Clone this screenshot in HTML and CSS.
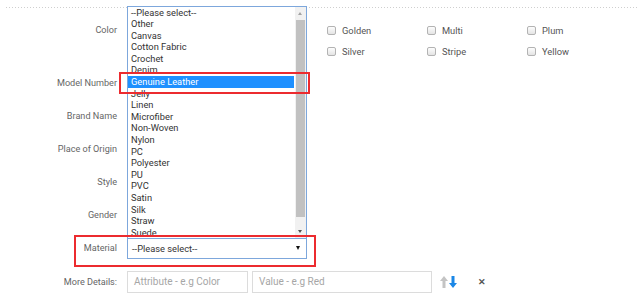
FILE: index.html
```html
<!DOCTYPE html>
<html>
<head>
<meta charset="utf-8">
<link rel="stylesheet" href="styles.css">
</head>
<body>
<div class="form">
  <div class="divider"></div>
  <div class="row row-color">
    <div class="lbl">Color</div>
    <div class="checks">
      <div class="chk c3"><span class="box"></span>Golden</div>
      <div class="chk"><span class="box"></span>Multi</div>
      <div class="chk"><span class="box"></span>Plum</div>
      <div class="chk c3"><span class="box"></span>Silver</div>
      <div class="chk"><span class="box"></span>Stripe</div>
      <div class="chk"><span class="box"></span>Yellow</div>
    </div>
  </div>
  <div class="row"><div class="lbl">Model Number</div><div class="field"><div class="text"></div></div></div>
  <div class="row"><div class="lbl">Brand Name</div><div class="field"><div class="text"></div></div></div>
  <div class="row"><div class="lbl">Place of Origin</div><div class="field"><div class="text"></div></div></div>
  <div class="row"><div class="lbl">Style</div><div class="field"><div class="text"></div></div></div>
  <div class="row"><div class="lbl">Gender</div><div class="field"><div class="text"></div></div></div>
  <div class="row"><div class="lbl">Material</div>
    <div class="field">
      <div class="select"><span>--Please select--</span><span class="caret"></span></div>
      <div class="mark mark-select"></div>
      <div class="listbox">
        <ul class="items">
          <li>--Please select--</li>
          <li>Other</li>
          <li>Canvas</li>
          <li>Cotton Fabric</li>
          <li>Crochet</li>
          <li>Denim</li>
          <li class="sel">Genuine Leather</li>
          <li>Jelly</li>
          <li>Linen</li>
          <li>Microfiber</li>
          <li>Non-Woven</li>
          <li>Nylon</li>
          <li>PC</li>
          <li>Polyester</li>
          <li>PU</li>
          <li>PVC</li>
          <li>Satin</li>
          <li>Silk</li>
          <li>Straw</li>
          <li>Suede</li>
        </ul>
        <div class="sbar">
          <span class="sb-up"></span>
          <span class="sb-thumb"></span>
          <span class="sb-down"></span>
        </div>
        <div class="mark mark-item"></div>
      </div>
    </div>
  </div>
  <div class="row row-more"><div class="lbl">More Details:</div>
    <div class="field more">
      <div class="inp inp-attr">Attribute - e.g Color</div>
      <div class="inp inp-val">Value - e.g Red</div>
      <span class="arrows">
        <svg width="8" height="12" viewBox="0 0 8 12"><path d="M4 0 L8 5 L5.5 5 L5.5 12 L2.5 12 L2.5 5 L0 5 Z" fill="#c4c4c4"/></svg>
        <svg width="8" height="12" viewBox="0 0 8 12"><path d="M4 12 L8 7 L5.5 7 L5.5 0 L2.5 0 L2.5 7 L0 7 Z" fill="#1b87e6"/></svg>
      </span>
      <span class="close">✕</span>
    </div>
  </div>
</div>
</body>
</html>
```
FILE: styles.css
```css
html, body {
  margin: 0;
  padding: 0;
  background: #fff;
}
body {
  font-family: Roboto, "Liberation Sans", sans-serif;
  font-size: 10px;
  color: #333;
  width: 637px;
  height: 302px;
  overflow: hidden;
}
.form {
  padding-top: 7px;
}
.divider {
  height: 1px;
  margin-left: 6px;
  background-image: repeating-linear-gradient(to right, #cfcfcf 0 1px, transparent 1px 3px);
}
.row {
  display: grid;
  grid-template-columns: 117px 1fr;
  column-gap: 10px;
  align-items: center;
  height: 33px;
}
.lbl {
  text-align: right;
  color: #666;
  font-size: 9.1px;
}
.row-color {
  height: auto;
  align-items: start;
  padding: 11.5px 0 5px;
}
.row-color .lbl {
  line-height: 21px;
}
.checks {
  display: grid;
  grid-template-columns: repeat(5, 100px);
  grid-auto-rows: 21px;
}
.chk.c3 {
  grid-column-start: 3;
}
.chk {
  display: flex;
  align-items: center;
  gap: 6px;
  color: #555;
  font-size: 9.3px;
}
.box {
  width: 9px;
  height: 9px;
  box-sizing: border-box;
  border: 1px solid #b3b3b3;
  border-radius: 2px;
  background: linear-gradient(#fdfdfd, #e4e4e4);
}
.field {
  position: relative;
}
.text {
  width: 180px;
  height: 21px;
  box-sizing: border-box;
  border: 1px solid #ddd;
}
.select {
  width: 180px;
  height: 21px;
  box-sizing: border-box;
  border: 1px solid #7da7dc;
  display: flex;
  align-items: center;
  justify-content: space-between;
  padding: 0 6px 0 4px;
  font-size: 9.3px;
  color: #333;
}
.caret {
  width: 0;
  height: 0;
  border-left: 2.5px solid transparent;
  border-right: 2.5px solid transparent;
  border-top: 4px solid #111;
}
.listbox {
  position: absolute;
  left: 0;
  bottom: 21px;
  width: 180px;
  height: 232px;
  box-sizing: border-box;
  background: #fff;
  border: 1px solid #7da7dc;
  border-bottom: none;
  display: flex;
  z-index: 2;
}
.items {
  list-style: none;
  margin: 0;
  padding: 0;
  flex: 1;
  overflow: hidden;
}
.items li {
  height: 11.6px;
  line-height: 11.6px;
  padding-left: 3px;
  font-size: 9.3px;
  color: #333;
  white-space: nowrap;
}
.items li.sel {
  background: #1e90ff;
  color: #fff;
  margin-right: 1px;
}
.sbar {
  width: 11px;
  background: #f1f1f1;
  display: flex;
  flex-direction: column;
  align-items: center;
}
.sb-up, .sb-down {
  height: 13px;
  width: 11px;
  position: relative;
}
.sb-up::after, .sb-down::after {
  content: "";
  position: absolute;
  left: 3px;
  width: 0;
  height: 0;
  border-left: 2.5px solid transparent;
  border-right: 2.5px solid transparent;
}
.sb-up::after {
  top: 5px;
  border-bottom: 3px solid #a3a3a3;
}
.sb-down::after {
  top: 5px;
  border-top: 3px solid #505050;
}
.sb-thumb {
  width: 9px;
  flex: 1;
  background: #c1c1c1;
  margin-bottom: 8px;
}
.mark {
  position: absolute;
  box-sizing: border-box;
  border: 2px solid #ec2b2f;
  z-index: 3;
}
.mark-item {
  left: -9px;
  top: 65px;
  width: 191px;
  height: 22px;
}
.mark-select {
  left: -53px;
  top: -3px;
  width: 242px;
  height: 32px;
}
.row-more {
  height: 35px;
}
.more {
  display: flex;
  align-items: center;
}
.inp {
  height: 22px;
  box-sizing: border-box;
  border: 1px solid #dcdcdc;
  color: #a6a6a6;
  font-size: 10px;
  line-height: 20px;
  padding-left: 6px;
}
.inp-attr {
  width: 121px;
}
.inp-val {
  width: 180px;
  margin-left: 4px;
}
.arrows {
  display: flex;
  gap: 1px;
  margin-left: 8px;
}
.arrows svg {
  display: block;
}
.close {
  margin-left: 21px;
  font-size: 9px;
  color: #555;
  font-weight: bold;
}
```
